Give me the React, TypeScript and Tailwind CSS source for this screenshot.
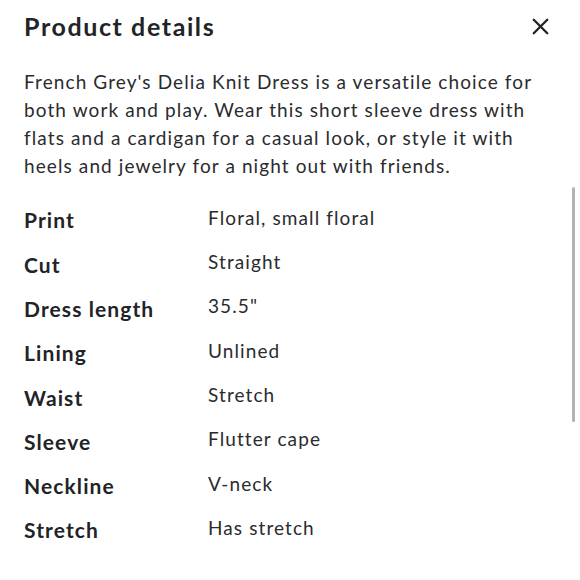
import { X } from "lucide-react";

const details = [
    { label: "Print", value: "Floral, small floral" },
    { label: "Cut", value: "Straight" },
    { label: "Dress length", value: "35.5\"" },
    { label: "Lining", value: "Unlined" },
    { label: "Waist", value: "Stretch" },
    { label: "Sleeve", value: "Flutter cape" },
    { label: "Neckline", value: "V-neck" },
    { label: "Stretch", value: "Has stretch" },
];

export default function App() {
    return (
        <div className="relative w-[580px] h-[580px] overflow-hidden bg-white text-[#222326] font-['Lato',sans-serif]">
            <div className="flex items-center justify-between pl-6 pr-[26px] pt-[9px]">
                <h1 className="text-[25px] font-bold leading-[34px] tracking-[1.6px]">Product details</h1>
                <X className="w-[27px] h-[27px] text-[#222326]" strokeWidth={2.1} />
            </div>

            <p className="mt-[25px] px-6 pr-10 text-[19px] leading-[28px] tracking-[1.1px] text-[#2a2b2e]">
                French Grey's Delia Knit Dress is a versatile choice for both work and play. Wear this short sleeve dress with flats and a cardigan for a casual look, or style it with heels and jewelry for a night out with friends.
            </p>

            <div className="mt-[18px] px-6 flex flex-col">
                {details.map((d) => (
                    <div key={d.label} className="flex items-center h-[44.3px]">
                        <span className="w-[184px] text-[21px] font-bold tracking-[1.1px]">{d.label}</span>
                        <span className="text-[19px] tracking-[1.1px] text-[#2a2b2e] -mt-1">{d.value}</span>
                    </div>
                ))}
            </div>

            {/* scroll indicator */}
            <div className="absolute left-[572px] top-[187px] w-[3px] h-[235px] rounded-full bg-[#b3b3b3]" />
        </div>
    );
}
